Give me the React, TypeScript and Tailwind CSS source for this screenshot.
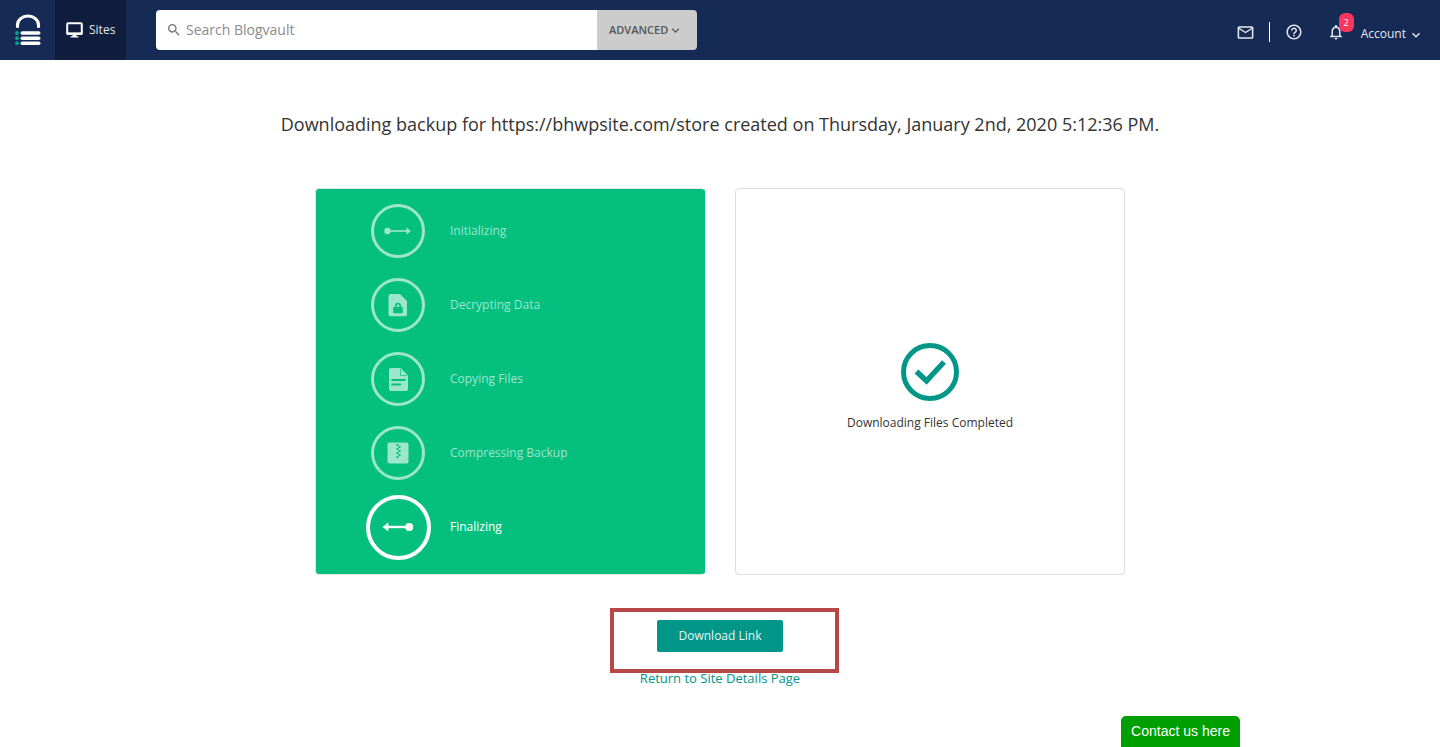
import { ReactNode } from "react";
import { MdSearch } from "react-icons/md";
import { MdKeyboardArrowDown } from "react-icons/md";
import { MdMailOutline } from "react-icons/md";
import { MdHelpOutline } from "react-icons/md";
import { MdNotificationsNone } from "react-icons/md";

const Logo = () => (
  <svg width="28" height="34" viewBox="0 0 28 34" fill="none">
    <path d="M3.5 13.5V12a10.5 9 0 0 1 21 0v1.5" stroke="#fff" strokeWidth="3.2" strokeLinecap="round" />
    <rect x="6.5" y="18.2" width="20" height="3.6" rx="1.8" fill="#fff" />
    <rect x="6.5" y="23.4" width="20" height="3.6" rx="1.8" fill="#fff" />
    <rect x="6.5" y="28.4" width="20" height="3.6" rx="1.8" fill="#fff" />
    <circle cx="3" cy="20" r="1.9" fill="#05a58a" />
    <circle cx="3" cy="25.2" r="1.9" fill="#05a58a" />
    <circle cx="3" cy="30.2" r="1.9" fill="#05a58a" />
  </svg>
);

const Monitor = () => (
  <svg width="17" height="16" viewBox="0 0 17 16" fill="none">
    <rect x="1.2" y="1.2" width="14.6" height="10.6" rx="1" stroke="#fff" strokeWidth="2" />
    <path d="M.5 10.5h16v2.2H.5zM6.5 12.5h4V14.5h-4zM4.5 14.2h8v1.3h-8z" fill="#fff" />
  </svg>
);

const ArrowRight = () => (
  <svg width="28" height="10" viewBox="0 0 28 10" fill="none">
    <circle cx="3.5" cy="5" r="3.2" fill="#9be6cc" />
    <path d="M4 5h21" stroke="#9be6cc" strokeWidth="1.6" />
    <path d="M22.5 1.2 26.8 5l-4.3 3.8z" fill="#9be6cc" />
  </svg>
);

const ArrowLeft = () => (
  <svg width="32" height="10" viewBox="0 0 32 10" fill="none">
    <circle cx="27.2" cy="5" r="4" fill="#fff" />
    <path d="M4 5h23" stroke="#fff" strokeWidth="2.4" />
    <path d="M6.4 .4 .6 5l5.8 4.6z" fill="#fff" />
  </svg>
);

const LockFile = () => (
  <svg width="20" height="24" viewBox="0 0 20 24">
    <path
      fill="#9be6cc"
      fillRule="evenodd"
      d="M2.5 1H12l7 7v13.2a2 2 0 0 1-2 2H2.5a2 2 0 0 1-2-2V3a2 2 0 0 1 2-2zM6 14h1v-1.2a3 3 0 0 1 6 0V14h1a.8.8 0 0 1 .8.8v4.6a.8.8 0 0 1-.8.8H6a.8.8 0 0 1-.8-.8v-4.6A.8.8 0 0 1 6 14zm2.6 0h2.8v-1.2a1.4 1.4 0 0 0-2.8 0z"
    />
  </svg>
);

const DocFile = () => (
  <svg width="19" height="23" viewBox="0 0 19 23">
    <path fill="#9be6cc" d="M2 0h9.5L19 7.5V21a2 2 0 0 1-2 2H2a2 2 0 0 1-2-2V2a2 2 0 0 1 2-2z" />
    <path fill="#05bf7f" d="M2.5 11h14v2h-14zM2.5 15.5h9.5v2H2.5z" />
    <path stroke="#05bf7f" strokeWidth=".7" fill="none" d="M11.5 1v6.5H18" />
  </svg>
);

const ZipBox = () => (
  <svg width="22" height="22" viewBox="0 0 22 22">
    <rect width="21" height="21" x=".5" y=".5" rx="2" fill="#9be6cc" />
    <path
      fill="#05bf7f"
      d="M9.5 2h2v2h-2zM11.5 4h2v2h-2zM9.5 6h2v2h-2zM11.5 8h2v2h-2zM9.5 10h2v2h-2zM11.5 12h2v2h-2zM9.5 14h2v2h-2z"
    />
  </svg>
);

const CheckCircle = () => (
  <svg width="60" height="60" viewBox="0 0 60 60" fill="none">
    <circle cx="30" cy="30" r="26.5" stroke="#009688" strokeWidth="5" />
    <path d="M16.5 29.5 26.5 39 44 20" stroke="#009688" strokeWidth="5.4" />
  </svg>
);

type Step = { label: string; icon: ReactNode; active?: boolean };

const steps: Step[] = [
  { label: "Initializing", icon: <ArrowRight /> },
  { label: "Decrypting Data", icon: <LockFile /> },
  { label: "Copying Files", icon: <DocFile /> },
  { label: "Compressing Backup", icon: <ZipBox /> },
  { label: "Finalizing", icon: <ArrowLeft />, active: true },
];

const Header = () => (
  <header className="h-[60px] bg-[#152a54] flex items-center text-white">
    <div className="w-[55px] h-full flex items-center justify-center pl-px">
      <Logo />
    </div>
    <div className="w-[71px] h-full bg-[#111d3d] flex items-center pl-[11px] gap-[6px]">
      <Monitor />
      <span className="text-[12px] text-[#e3e6ec]">Sites</span>
    </div>
    <div className="ml-[30px] w-[541px] h-10 flex rounded-[4px] overflow-hidden">
      <div className="w-[441px] bg-white flex items-center pl-[10px] gap-1">
        <MdSearch className="text-[16px] text-[#777]" />
        <span className="text-[14px] leading-[18px] pb-px text-[#8b8b8b]">Search Blogvault</span>
      </div>
      <div className="flex-1 bg-[#cccccc] flex items-center pl-3">
        <span className="text-[11px] font-semibold text-[#555]">ADVANCED</span>
        <MdKeyboardArrowDown className="text-[15px] text-[#555]" />
      </div>
    </div>
    <div className="ml-auto flex items-center h-full pt-[4px]">
      <MdMailOutline className="text-[19px] text-[#e6e8ee]" />
      <div className="w-px h-5 bg-white ml-[14px] mr-[15px]" />
      <MdHelpOutline className="text-[18px] text-[#e6e8ee]" />
      <div className="relative ml-[24px]">
        <MdNotificationsNone className="text-[18px] text-[#e6e8ee]" />
        <span className="absolute -top-[10px] left-[12px] w-[15px] h-[19px] rounded-[6px] bg-[#f9365e] text-[9px] text-white flex items-center justify-center">
          2
        </span>
      </div>
      <span className="ml-[16px] text-[12px] text-[#e6e8ee] pt-[3px]">Account</span>
      <MdKeyboardArrowDown className="ml-[2px] mr-[16px] mt-[6px] text-[16px] text-[#e6e8ee]" />
    </div>
  </header>
);

const StepRow = ({ step }: { step: Step }) => (
  <div className="h-[74px] flex items-center">
    <div className="w-16 flex justify-center">
      <div
        className={
          step.active
            ? "w-[65px] h-[65px] shrink-0 rounded-full border-4 border-white flex items-center justify-center"
            : "w-[54px] h-[54px] rounded-full border-[3px] border-[#9be6cc] flex items-center justify-center"
        }
      >
        {step.icon}
      </div>
    </div>
    <span className={step.active ? "ml-5 text-[12px] text-white" : "ml-5 text-[12px] text-[#9be6cc]"}>
      {step.label}
    </span>
  </div>
);

export default function App() {
  return (
    <div className="relative w-[1440px] h-[747px] overflow-hidden bg-white font-['Open_Sans',sans-serif]">
      <Header />
      <main className="flex flex-col items-center">
        <h1 className="mt-[51px] h-[26px] leading-[26px] text-[18px] font-normal text-[#333]">
          Downloading backup for https://bhwpsite.com/store created on Thursday, January 2nd, 2020 5:12:36 PM.
        </h1>
        <div className="mt-[51px] flex gap-[30px]">
          <div className="w-[390px] h-[387px] rounded-[4px] border border-[#e3e6e5] border-r-[#05bf7f] bg-[#05bf7f] pt-[5px] pl-[50px]">
            {steps.map((s) => (
              <StepRow key={s.label} step={s} />
            ))}
          </div>
          <div className="w-[390px] h-[387px] rounded-[4px] border border-[#ddd] flex flex-col items-center pt-[153px]">
            <CheckCircle />
            <span className="mt-[12px] text-[12px] leading-[18px] text-[#333]">Downloading Files Completed</span>
          </div>
        </div>
        <button className="mt-[45px] w-[126px] h-8 rounded-[2px] bg-[#009688] text-[12px] text-[#e8f5f3]">
          Download Link
        </button>
        <a className="mt-[17px] text-[13px] leading-[18px] text-[#009688]">Return to Site Details Page</a>
      </main>
      <div className="absolute left-[610px] top-[608px] w-[229px] h-[65px] border-4 border-[#b84747]" />
      <div className="absolute left-[1121px] top-[716px] w-[119px] h-[31px] rounded-t-[5px] bg-[#009f00] flex items-center justify-center font-['Liberation_Sans',sans-serif] text-[14px] text-white">
        Contact us here
      </div>
    </div>
  );
}
